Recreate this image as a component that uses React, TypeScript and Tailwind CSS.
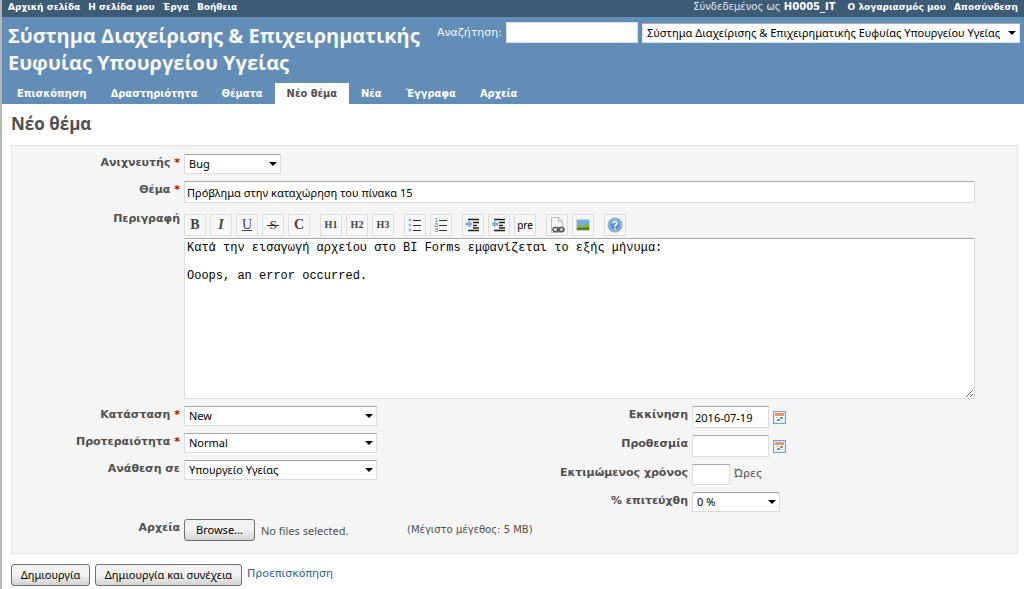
import { useRef, useState } from "react";
import type { ReactNode } from "react";
import clsx from "clsx";

const topMenu = ["Αρχική σελίδα", "Η σελίδα μου", "Έργα", "Βοήθεια"];
const tabs = [
  "Επισκόπηση",
  "Δραστηριότητα",
  "Θέματα",
  "Νέο θέμα",
  "Νέα",
  "Έγγραφα",
  "Αρχεία",
];

const verdana = "font-['DejaVu_Sans',sans-serif]";
const tahoma = "font-['Noto_Sans','DejaVu_Sans',sans-serif]";
const trebuchet = "font-['Open_Sans',sans-serif]";
const field =
  "border border-[#dcdcdc] border-t-[#a9a9a9] bg-white text-black outline-none";

function Select({
  id,
  options,
  className,
}: {
  id: string;
  options: string[];
  className?: string;
}) {
  return (
    <div className={clsx("relative h-5", className)}>
      <select
        id={id}
        className={clsx(
          field,
          tahoma,
          "block h-full w-full appearance-none pr-4 pl-1 text-[11px] leading-[18px]"
        )}
      >
        {options.map((o) => (
          <option key={o}>{o}</option>
        ))}
      </select>
      <svg
        viewBox="0 0 8 4"
        className="pointer-events-none absolute top-2 right-1 h-1 w-2"
      >
        <path d="M0 0h8L4 4z" fill="#000" />
      </svg>
    </div>
  );
}

function Row({
  id,
  label,
  required,
  children,
}: {
  id: string;
  label: string;
  required?: boolean;
  children: ReactNode;
}) {
  return (
    <div className="grid grid-cols-[168px_1fr] gap-x-1">
      <label
        htmlFor={id}
        className="text-right text-[11px] leading-[18px] font-bold whitespace-nowrap text-[#505050]"
      >
        {label}
        {required && <span className="text-[#bb0000]"> *</span>}
      </label>
      <div className="flex min-w-0 items-start">{children}</div>
    </div>
  );
}

function ListIcon({ numbered }: { numbered?: boolean }) {
  return (
    <svg viewBox="0 0 16 16" className="size-4">
      {numbered ? (
        <path
          d="M2 1.500h1.500v3M2 4.500h3M2 6.500h2.500v1.500H2v1.500h3M2 11.500h2.500v3H2M2.500 13h2"
          fill="none"
          stroke="#7fa8dc"
        />
      ) : (
        <path
          d="M2 2h2v2H2zM2 7h2v2H2zM2 12h2v2H2z"
          fill="#5c88cf"
          stroke="#a9c3ec"
        />
      )}
      <path d="M6 3.500h8M6 8.500h8M6 13.500h8" stroke="#333" />
    </svg>
  );
}

function QuoteIcon({ out }: { out?: boolean }) {
  return (
    <svg viewBox="0 0 16 16" className="size-4">
      <path
        d="M3 2.500h11M8 5.500h6M8 8.500h4M8 11h6M3 13.500h11"
        stroke="#222"
        strokeWidth="1.500"
      />
      <path
        d={out ? "M1 7l3-3v2h3v2H4v2z" : "M7 7L4 4v2H1v2h3v2z"}
        fill="#8db4e6"
        stroke="#4f81c4"
        strokeWidth=".5"
      />
    </svg>
  );
}

function WikiLinkIcon() {
  return (
    <svg viewBox="0 0 16 16" className="size-4">
      <path d="M2.500.500h7l4 4v11h-11z" fill="#fafafa" stroke="#bbb" />
      <path d="M9.500.500v4h4" fill="#ddd" stroke="#bbb" />
      <g fill="none" stroke="#555" strokeWidth="1.500">
        <rect x="4" y="10.500" width="5.500" height="4" rx="2" />
        <rect x="9.500" y="10.500" width="5.500" height="4" rx="2" />
        <path d="M7.500 12.500h4" />
      </g>
    </svg>
  );
}

function ImageIcon() {
  return (
    <svg viewBox="0 0 16 16" className="size-4">
      <rect x="1.500" y="2.500" width="13" height="11" fill="#fff" stroke="#d0d0d0" />
      <path d="M2 3h12v10H2z" fill="#6fb1ea" />
      <path d="M2 9c3-2 5 0 7-1s3-1 5-1v6H2z" fill="#8bb33e" />
      <path d="M2 11c4-1 8 .5 12-1.500V13H2z" fill="#4f8424" />
    </svg>
  );
}

function HelpIcon() {
  return (
    <svg viewBox="0 0 16 16" className="size-4">
      <circle cx="8" cy="8" r="7" fill="#5b91cb" stroke="#86aeda" />
      <circle cx="8" cy="8" r="5.500" fill="none" stroke="#b9d3ee" />
      <path
        d="M6 6.500C6 3.800 10.200 4 10 6.500 9.900 7.800 8 7.800 8 9.500M8 10.800v1.500"
        fill="none"
        stroke="#fff"
        strokeWidth="1.600"
      />
    </svg>
  );
}

function CalendarIcon() {
  return (
    <svg viewBox="0 0 13 13" className="size-[13px]">
      <rect x=".5" y=".5" width="12" height="12" fill="#dfeaf6" stroke="#6f9fd0" />
      <path d="M2 2h9v3H2z" fill="#f0965a" />
      <path d="M2 5h9v6H2z" fill="#f4f8fc" />
      <path d="M7 6h3v2H7zM4 8h3v2H4z" fill="#6f9f86" />
      <path d="M8 9h2v1H8zM3 6h2v1H3z" fill="#a9c3de" />
    </svg>
  );
}

const serif = "font-['Liberation_Serif',serif] font-bold text-[#444]";
const toolbar: { title: string; icon: ReactNode }[][] = [
  [
    { title: "Strong", icon: <span className={clsx(serif, "text-[14px]")}>B</span> },
    { title: "Italic", icon: <span className={clsx(serif, "text-[14px] italic")}>I</span> },
    {
      title: "Underline",
      icon: (
        <span className="font-['Liberation_Serif',serif] text-[14px] text-[#444] underline">
          U
        </span>
      ),
    },
    {
      title: "Deleted",
      icon: (
        <svg viewBox="0 0 16 16" className="size-4">
          <text
            x="8"
            y="12"
            textAnchor="middle"
            className="fill-[#555] font-['Liberation_Serif',serif] text-[13px] font-bold"
          >
            S
          </text>
          <path d="M2 8.500h12" stroke="#333" />
        </svg>
      ),
    },
    { title: "Code", icon: <span className={clsx(serif, "text-[14px]")}>C</span> },
  ],
  [
    { title: "Heading 1", icon: <span className={clsx(serif, "text-[10px]")}>H1</span> },
    { title: "Heading 2", icon: <span className={clsx(serif, "text-[10px]")}>H2</span> },
    { title: "Heading 3", icon: <span className={clsx(serif, "text-[10px]")}>H3</span> },
  ],
  [
    { title: "Unordered list", icon: <ListIcon /> },
    { title: "Ordered list", icon: <ListIcon numbered /> },
  ],
  [
    { title: "Quote", icon: <QuoteIcon /> },
    { title: "Remove quote", icon: <QuoteIcon out /> },
    {
      title: "Preformatted text",
      icon: <span className={clsx(tahoma, "text-[10px] text-black")}>pre</span>,
    },
  ],
  [
    { title: "Wiki link", icon: <WikiLinkIcon /> },
    { title: "Image", icon: <ImageIcon /> },
  ],
  [{ title: "Help", icon: <HelpIcon /> }],
];

function Toolbar() {
  return (
    <div className="mt-1 mb-0.5 flex gap-2.5">
      {toolbar.map((group, i) => (
        <div key={i} className="flex gap-1">
          {group.map(({ title, icon }) => (
            <button
              key={title}
              type="button"
              title={title}
              className="flex size-[22px] items-center justify-center border border-[#dddddd] bg-[#f7f7f7] leading-none"
            >
              {icon}
            </button>
          ))}
        </div>
      ))}
    </div>
  );
}

const grayButton = clsx(
  tahoma,
  "h-[22px] rounded-[3px] border border-[#707070] bg-linear-to-b from-[#f2f2f2] from-50% to-[#d2d2d2] text-[11px] text-black"
);

export default function App() {
  const fileRef = useRef<HTMLInputElement>(null);
  const [description, setDescription] = useState(
    "Κατά την εισαγωγή αρχείου στο BI Forms εμφανίζεται το εξής μήνυμα:\n\nOoops, an error occurred."
  );

  return (
    <div
      className={clsx(
        verdana,
        "min-h-screen border-l-2 border-[#b4b6ba] bg-white text-[12px] text-[#505050]"
      )}
    >
      <nav className="flex h-[17px] justify-between bg-[#3e5b76] pr-1.5 pl-1.5 text-[9px] leading-[14px] font-bold text-white">
        <div className="flex gap-2">
          {topMenu.map((t) => (
            <a key={t} href="#">
              {t}
            </a>
          ))}
        </div>
        <div className="flex gap-2">
          <span className="mr-1 text-[10px] font-normal text-[#e0e8f0]">
            Σύνδεδεμένος ως{" "}
            <a href="#" className="font-bold text-white">
              H0005_IT
            </a>
          </span>
          <a href="#">Ο λογαριασμός μου</a>
          <a href="#">Αποσύνδεση</a>
        </div>
      </nav>

      <header className="bg-[#628db6] text-[#f8f8f8]">
        <div className="flex items-start justify-between pt-[5px] pr-1 pl-1.5">
          <h1 className={clsx(trebuchet, "w-[424px] text-[20px] leading-[27px] font-bold")}>
            Σύστημα Διαχείρισης &amp; Επιχειρηματικής Ευφυίας Υπουργείου Υγείας
          </h1>
          <div className="flex items-center gap-1">
            <label htmlFor="q" className="text-[11px] leading-4 whitespace-nowrap">
              Αναζήτηση:
            </label>
            <input
              id="q"
              type="text"
              className="h-[21px] w-[132px] border border-[#dcdcdc] bg-white px-1 text-[11px] text-black outline-none"
            />
            <Select
              id="project"
              className="w-[378px]"
              options={["Σύστημα Διαχείρισης & Επιχειρηματικής Ευφυίας Υπουργείου Υγείας"]}
            />
          </div>
        </div>
        <nav className="mt-[7px] flex pl-[3px]">
          {tabs.map((t) => (
            <a
              key={t}
              href="#"
              className={clsx(
                "px-3 font-['DejaVu_Sans_Condensed','DejaVu_Sans',sans-serif] text-[11px] leading-[21px] font-bold",
                t === "Νέο θέμα" ? "bg-white text-[#505050]" : "text-white"
              )}
            >
              {t}
            </a>
          ))}
        </nav>
      </header>

      <main className="pr-1.5 pl-[9px]">
        <h2 className={clsx(trebuchet, "pt-2 pb-[9px] text-[17px] leading-6 font-bold")}>
          Νέο θέμα
        </h2>
        <form onSubmit={(e) => e.preventDefault()}>
          <div className="flex flex-col gap-[7px] border border-[#e4e4e4] bg-[#f5f5f5] pt-2 pb-2.5">
            <Row id="tracker" label="Ανιχνευτής" required>
              <Select id="tracker" className="w-[97px]" options={["Bug"]} />
            </Row>
            <Row id="subject" label="Θέμα" required>
              <input
                id="subject"
                type="text"
                defaultValue="Πρόβλημα στην καταχώρηση του πίνακα 15"
                className={clsx(field, tahoma, "h-[22px] w-[95%] px-0.5 text-[11px]")}
              />
            </Row>
            <Row id="description" label="Περιγραφή">
              <div className="w-[95%]">
                <Toolbar />
                <textarea
                  id="description"
                  value={description}
                  onChange={(e) => setDescription(e.target.value)}
                  className={clsx(
                    field,
                    "block h-[161px] w-full px-0.5 py-0.5 font-['Liberation_Mono',monospace] text-[12px] leading-[14px]"
                  )}
                />
              </div>
            </Row>

            <div className="grid grid-cols-2 gap-x-[11px]">
              <div className="flex flex-col gap-[7px]">
                <Row id="status" label="Κατάσταση" required>
                  <Select id="status" className="w-[193px]" options={["New"]} />
                </Row>
                <Row id="priority" label="Προτεραιότητα" required>
                  <Select id="priority" className="w-[193px]" options={["Normal"]} />
                </Row>
                <Row id="assignee" label="Ανάθεση σε">
                  <Select id="assignee" className="w-[193px]" options={["Υπουργείο Υγείας"]} />
                </Row>
              </div>
              <div className="flex flex-col gap-[7px]">
                <Row id="start" label="Εκκίνηση">
                  <input
                    id="start"
                    type="text"
                    defaultValue="2016-07-19"
                    className={clsx(field, tahoma, "h-[22px] w-[77px] px-0.5 text-[11px]")}
                  />
                  <button type="button" aria-label="Ημερολόγιο" className="mt-[5px] ml-1">
                    <CalendarIcon />
                  </button>
                </Row>
                <Row id="due" label="Προθεσμία">
                  <input
                    id="due"
                    type="text"
                    className={clsx(field, tahoma, "h-[22px] w-[77px] px-0.5 text-[11px]")}
                  />
                  <button type="button" aria-label="Ημερολόγιο" className="mt-[5px] ml-1">
                    <CalendarIcon />
                  </button>
                </Row>
                <Row id="hours" label="Εκτιμώμενος χρόνος">
                  <input
                    id="hours"
                    type="text"
                    className={clsx(field, tahoma, "h-[21px] w-[38px] px-0.5 text-[11px]")}
                  />
                  <span className="ml-1 text-[11px] leading-5">Ώρες</span>
                </Row>
                <Row id="done" label="% επιτεύχθη">
                  <Select id="done" className="w-[88px]" options={["0 %"]} />
                </Row>
              </div>
            </div>

            <Row id="files" label="Αρχεία">
              <input ref={fileRef} id="files" type="file" className="hidden" />
              <button
                type="button"
                onClick={() => fileRef.current?.click()}
                className={clsx(grayButton, "w-[71px]")}
              >
                Browse...
              </button>
              <span className={clsx(tahoma, "ml-1.5 w-[146px] text-[11px] leading-6")}>
                No files selected.
              </span>
              <span className="text-[10px] leading-[22px]">(Μέγιστο μέγεθος: 5 MB)</span>
            </Row>
          </div>

          <div className="mt-2.5 flex items-start gap-[5px]">
            <button type="submit" className={clsx(grayButton, "w-[79px]")}>
              Δημιουργία
            </button>
            <button type="submit" className={clsx(grayButton, "w-[147px]")}>
              Δημιουργία και συνέχεια
            </button>
            <a href="#" className="text-[11px] leading-5 text-[#2a6496]">
              Προεπισκόπηση
            </a>
          </div>
        </form>
      </main>
    </div>
  );
}
